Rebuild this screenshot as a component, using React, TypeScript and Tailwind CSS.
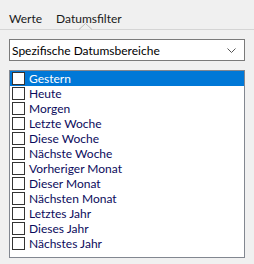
const items = [
  "Gestern",
  "Heute",
  "Morgen",
  "Letzte Woche",
  "Diese Woche",
  "Nächste Woche",
  "Vorheriger Monat",
  "Dieser Monat",
  "Nächsten Monat",
  "Letztes Jahr",
  "Dieses Jahr",
  "Nächstes Jahr",
];

export default function App() {
  const font = { fontFamily: 'Lato, "Liberation Sans", sans-serif' };
  return (
    <div
      className="w-[254px] h-[264px] bg-[#f0f0f0] flex flex-col text-[12px] leading-[15px]"
      style={font}
    >
      {/* tabs */}
      <div className="relative h-[30px] border-b border-[#d5d5d5] flex items-end pb-[3px]">
        <span className="ml-[9px] text-[#1a1a1a]">Werte</span>
        <span className="ml-[14px] text-[#1a1a1a]">Datumsfilter</span>
        <svg className="absolute left-[79px] top-[23px]" width="13" height="7" viewBox="0 0 13 7">
          <path d="M0 6.5 L6.5 0.5 L13 6.5" fill="#f0f0f0" stroke="#bdbdbd" strokeWidth="1" />
        </svg>
      </div>

      {/* combo */}
      <div className="mx-[9px] mt-[9px] h-[22px] bg-white border border-[#7a7a7a] flex items-center justify-between pl-[2px] pr-[8px]">
        <span className="text-black">Spezifische Datumsbereiche</span>
        <svg width="9" height="5" viewBox="0 0 9 5">
          <path d="M0.5 0.5 L4.5 4.5 L8.5 0.5" fill="none" stroke="#555" strokeWidth="1" />
        </svg>
      </div>

      {/* list */}
      <div className="mx-[9px] mt-[9px] h-[188px] bg-white border border-[#828790] flex flex-col">
        {items.map((label, i) => (
          <div
            key={label}
            className={`h-[15px] flex items-center pl-[2px] ${i === 0 ? "bg-[#0078d7] text-white" : "text-[#0b0b5c]"}`}
          >
            <span className="w-[13px] h-[13px] border border-[#333] bg-white shrink-0" />
            <span className="ml-[4px]">{label}</span>
          </div>
        ))}
      </div>
    </div>
  );
}
